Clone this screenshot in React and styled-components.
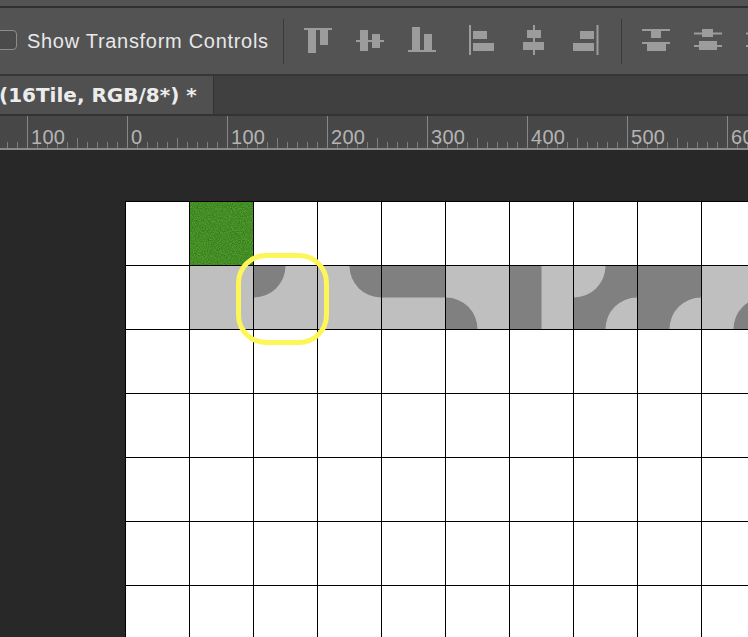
import React from 'react'
import styled, { createGlobalStyle } from 'styled-components'

const Global = createGlobalStyle`
html,body{
  margin:0;
  padding:0;
  background:#282828;
}
`
const Page = styled.div`
width:748px;
height:637px;
overflow:hidden;
position:relative;
display:flex;
flex-direction:column;
font-family:"Liberation Sans",Arial,sans-serif;
background:#282828;
`
const TopStrip = styled.div`
height:6px;
background:#535353;
border-bottom:2px solid #303030;
flex:none;
`
const OptionsBar = styled.div`
height:66px;
flex:none;
background:#535353;
border-bottom:2px solid #363636;
display:flex;
align-items:center;
white-space:nowrap;
`
const Check = styled.span`
width:21px;
height:20px;
margin:0 10px 2px -4px;
flex:none;
box-sizing:border-box;
border:1px solid #8c8c8c;
border-radius:4px;
background:#4b4b4b;
`
const OptionLabel = styled.span`
font-size:20px;
letter-spacing:.7px;
color:#e8e8e8;
width:246px;
flex:none;
`
const Divider = styled.span`
width:1.5px;
height:45px;
background:#3a3a3a;
flex:none;
margin-left:${p => p.$left}px;
`
const AlignIcon = styled.svg`
width:${p => p.$w}px;
height:32px;
flex:none;
margin-left:${p => p.$left}px;
fill:#9c9c9c;
`
const TabBar = styled.div`
height:38px;
flex:none;
background:#404040;
border-bottom:2px solid #333;
display:flex;
`
const Tab = styled.div`
width:214px;
box-sizing:border-box;
padding-right:1px;
background:#505050;
border-right:1px solid #333;
font-family:"DejaVu Sans",sans-serif;
font-weight:700;
font-size:20px;
text-indent:-1px;
line-height:38px;
color:#ececec;
white-space:nowrap;
`
const Ruler = styled.div`
height:32px;
flex:none;
background:#474747;
border-bottom:2px solid #8a8a8a;
display:flex;
`
const RulerMark = styled.div`
width:100px;
flex:none;
box-sizing:border-box;
padding:10px 0 0 3px;
border-left:1px solid #878787;
font-size:20px;
letter-spacing:.3px;
line-height:22px;
color:#b4b4b4;
background:
  linear-gradient(to right,#7d7d7d 1px,transparent 1px) 9px bottom / 10px 6px repeat-x,
  linear-gradient(to right,#7d7d7d 1px,transparent 1px) 49px bottom / 100px 10px no-repeat;
&:first-child{
  margin-left:-73px;
}
`
const Canvas = styled.div`
flex:1;
padding:51px 0 0 125px;
background:#282828;
position:relative;
`
const Grid = styled.div`
display:grid;
grid-template-columns:repeat(10,64px);
grid-auto-rows:64px;
width:640px;
background:#fff;
`
const Cell = styled.div`
box-sizing:border-box;
border-left:1px solid #000;
border-top:1px solid #000;
background:${p => p.$bg || '#fff'};
`
const TileArt = styled.svg`
display:block;
width:100%;
height:100%;
`
const Ring = styled.div`
position:absolute;
left:236px;
top:103px;
width:93px;
height:92px;
box-sizing:border-box;
border:5px solid #fdf658;
border-radius:30px;
`

const DARK = '#808080'
const LIGHT = '#bfbfbf'

// tile artwork, drawn in a 64 square
const tiles = {
  plain: null,
  cornerTL: <path d="M0 0H32A32 32 0 0 1 0 32Z" fill={DARK} />,
  cornerTR: <path d="M32 0H64V32A32 32 0 0 1 32 0Z" fill={DARK} />,
  topHalf: <rect width="64" height="32" fill={DARK} />,
  cornerBL: <path d="M0 32A32 32 0 0 1 32 64H0Z" fill={DARK} />,
  leftHalf: <rect width="32" height="64" fill={DARK} />,
  twoLight: (
    <>
      <rect width="64" height="64" fill={DARK} />
      <path d="M0 0H32A32 32 0 0 1 0 32Z" fill={LIGHT} />
      <path d="M64 32V64H32A32 32 0 0 1 64 32Z" fill={LIGHT} />
    </>
  ),
  oneLight: (
    <>
      <rect width="64" height="64" fill={DARK} />
      <path d="M64 32V64H32A32 32 0 0 1 64 32Z" fill={LIGHT} />
    </>
  ),
  cornerBR: <path d="M64 32V64H32A32 32 0 0 1 64 32Z" fill={DARK} />,
}

const tileRow = ['plain', 'cornerTL', 'cornerTR', 'topHalf', 'cornerBL', 'leftHalf', 'twoLight', 'oneLight', 'cornerBR']

const Tile = ({ name }) => (
  <Cell $bg={LIGHT}>
    <TileArt viewBox="0 0 64 64" preserveAspectRatio="none">{tiles[name]}</TileArt>
  </Cell>
)

const Grass = () => (
  <Cell $bg="#4f9f2d">
    <TileArt viewBox="0 0 64 64" preserveAspectRatio="none">
      <filter id="grain" x="0" y="0" width="100%" height="100%" colorInterpolationFilters="sRGB">
        <feTurbulence type="fractalNoise" baseFrequency="0.9" numOctaves="2" />
        <feColorMatrix values="0 0 0 0 0.2  0 0 0 0 0.45  0 0 0 0 0.1  1.8 0 0 0 -0.5" />
      </filter>
      <rect width="64" height="64" filter="url(#grain)" />
    </TileArt>
  </Cell>
)

// rects are x,y,w,h inside the icon box
const icons = [
  { w: 28, left: 20, r: [[0, 3, 28, 2], [4, 5, 8, 23], [16, 5, 8, 15]] },
  { w: 28, left: 24, r: [[0, 15, 28, 2], [4, 5, 8, 21], [16, 9, 8, 14]] },
  { w: 28, left: 24, r: [[0, 25, 28, 2], [4, 2, 8, 23], [16, 9, 8, 16]] },
  { w: 26, left: 33, r: [[0, 0, 2, 30], [4, 6, 14, 8], [4, 18, 21, 8]] },
  { w: 22, left: 28, r: [[10, 0, 2, 30], [4, 5, 14, 8], [0, 17, 21, 8]] },
  { w: 26, left: 28, r: [[23.5, 0, 2, 30], [7, 6, 14, 8], [0, 18, 21, 8]] },
]
const icons2 = [
  { w: 28, left: 20, r: [[0, 4, 28, 2], [9, 6, 10, 7], [0, 17, 28, 2], [5, 19, 19, 7]] },
  { w: 28, left: 24, r: [[0, 7.5, 28, 2], [8, 4, 11, 8], [0, 20, 28, 2], [5, 16, 18, 9]] },
  { w: 28, left: 24, r: [[0, 7.5, 28, 2], [0, 20, 28, 2]] },
]

const Icon = ({ w, left, r }) => (
  <AlignIcon $w={w} $left={left} viewBox={`0 0 ${w} 32`}>
    {r.map(([x, y, rw, rh], i) => <rect key={i} x={x} y={y} width={rw} height={rh} />)}
  </AlignIcon>
)

const marks = ['100', '0', '100', '200', '300', '400', '500', '600']

export default function App() {
  return (
    <Page>
      <Global />
      <TopStrip />
      <OptionsBar>
        <Check />
        <OptionLabel>Show Transform Controls</OptionLabel>
        <Divider $left={9.5} />
        {icons.map((ic, i) => <Icon key={i} {...ic} />)}
        <Divider $left={21.5} />
        {icons2.map((ic, i) => <Icon key={i} {...ic} />)}
      </OptionsBar>
      <TabBar>
        <Tab>(16Tile, RGB/8*) *</Tab>
      </TabBar>
      <Ruler>
        <RulerMark />
        {marks.map((m, i) => <RulerMark key={i}>{m}</RulerMark>)}
      </Ruler>
      <Canvas>
        <Grid>
          <Cell /><Grass />
          {Array.from({ length: 8 }, (_, i) => <Cell key={i} />)}
          <Cell />
          {tileRow.map((t, i) => <Tile key={i} name={t} />)}
          {Array.from({ length: 50 }, (_, i) => <Cell key={i} />)}
        </Grid>
        <Ring />
      </Canvas>
    </Page>
  )
}
